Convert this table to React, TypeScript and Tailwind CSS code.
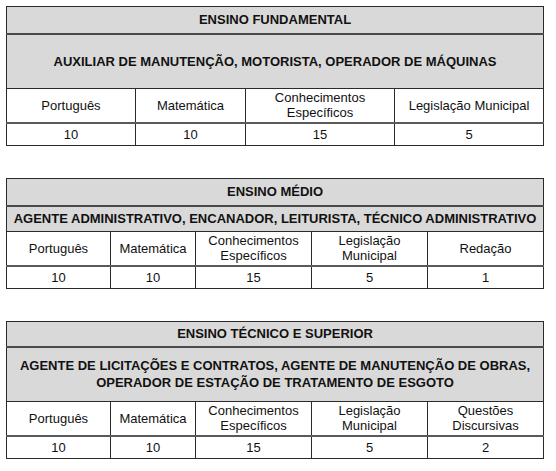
import React from "react";

interface Section {
  level: string;
  roles: string[];
  cols: number[];
  subjects: string[][];
  values: string[];
  roleHeight: string;
  levelHeight: string;
}

const sections: Section[] = [
  {
    level: "ENSINO FUNDAMENTAL",
    roles: ["AUXILIAR DE MANUTENÇÃO, MOTORISTA, OPERADOR DE MÁQUINAS"],
    cols: [129, 110, 149, 149],
    subjects: [["Português"], ["Matemática"], ["Conhecimentos", "Específicos"], ["Legislação Municipal"]],
    values: ["10", "10", "15", "5"],
    roleHeight: "h-[55px]",
    levelHeight: "h-[27px]",
  },
  {
    level: "ENSINO MÉDIO",
    roles: ["AGENTE ADMINISTRATIVO, ENCANADOR, LEITURISTA, TÉCNICO ADMINISTRATIVO"],
    cols: [104, 85, 116, 116, 116],
    subjects: [["Português"], ["Matemática"], ["Conhecimentos", "Específicos"], ["Legislação", "Municipal"], ["Redação"]],
    values: ["10", "10", "15", "5", "1"],
    roleHeight: "h-[26px]",
    levelHeight: "h-[27px]",
  },
  {
    level: "ENSINO TÉCNICO E SUPERIOR",
    roles: [
      "AGENTE DE LICITAÇÕES E CONTRATOS, AGENTE DE MANUTENÇÃO DE OBRAS,",
      "OPERADOR DE ESTAÇÃO DE TRATAMENTO DE ESGOTO",
    ],
    cols: [104, 85, 116, 116, 116],
    subjects: [["Português"], ["Matemática"], ["Conhecimentos", "Específicos"], ["Legislação", "Municipal"], ["Questões", "Discursivas"]],
    values: ["10", "10", "15", "5", "2"],
    roleHeight: "h-[55px]",
    levelHeight: "h-[25px]",
  },
];

function ExamTable({ s }: { s: Section }) {
  const n = s.cols.length;
  return (
    <table className="table-fixed border-collapse w-[538px] border border-[#2a2a2a]">
      <colgroup>
        {s.cols.map((w, i) => (
          <col key={i} style={{ width: w }} />
        ))}
      </colgroup>
      <tbody>
        <tr className={`${s.levelHeight} bg-[#d9d9d9]`}>
          <td colSpan={n} className="border-b-2 border-[#4a4a4a] text-center font-bold text-[13px] leading-[15px]">
            {s.level}
          </td>
        </tr>
        <tr className={`${s.roleHeight} bg-[#d9d9d9]`}>
          <td colSpan={n} className="border-b border-[#2a2a2a] text-center font-bold text-[13px] leading-[17px]">
            {s.roles.map((r, i) => (
              <div key={i}>{r}</div>
            ))}
          </td>
        </tr>
        <tr className="h-[34px]">
          {s.subjects.map((lines, i) => (
            <td
              key={i}
              className="border-r border-b-2 border-r-[#2a2a2a] border-b-[#5a5a5a] text-center text-[13px] leading-[15px]"
            >
              {lines.map((l, j) => (
                <div key={j}>{l}</div>
              ))}
            </td>
          ))}
        </tr>
        <tr className="h-[23px]">
          {s.values.map((v, i) => (
            <td key={i} className="border-r border-[#2a2a2a] text-center text-[13px] leading-[15px]">
              {v}
            </td>
          ))}
        </tr>
      </tbody>
    </table>
  );
}

export default function App() {
  return (
    <div className="w-[556px] h-[471px] bg-white text-[#111] pt-[6px] pl-[6px] flex flex-col gap-[32px] font-['Liberation_Sans',Arial,sans-serif]">
      {sections.map((s, i) => (
        <ExamTable key={i} s={s} />
      ))}
    </div>
  );
}
